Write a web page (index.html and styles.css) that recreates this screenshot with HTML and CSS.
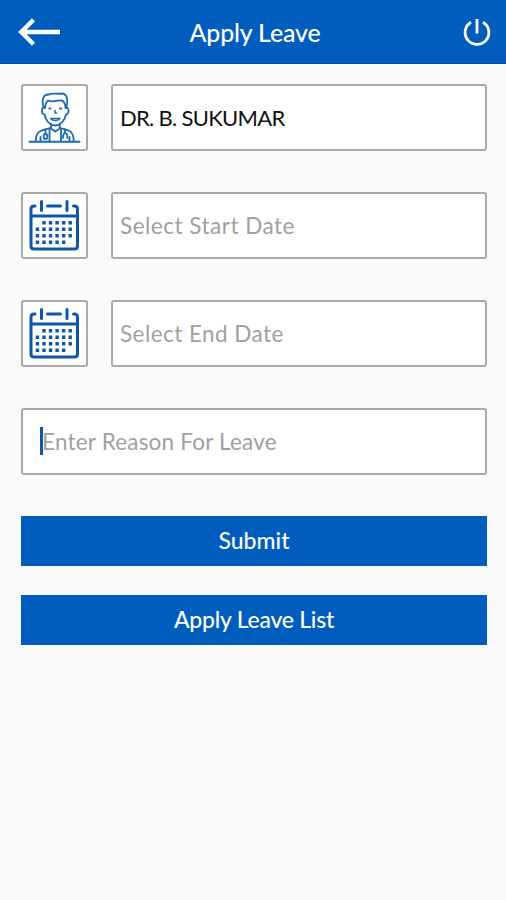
FILE: index.html
```html
<!DOCTYPE html>
<html lang="en">
<head>
    <meta charset="UTF-8">
    <title>Apply Leave</title>
    <link rel="stylesheet" href="styles.css">
</head>

<body>
<div class="header">
    <a href="#" class="back">
        <svg width="44" height="30" viewBox="0 0 44 30">
            <path d="M42 15H3M15.500 2.800L3.300 15L15.500 27.200" fill="none" stroke="#fff" stroke-width="4.4"/>
        </svg>
    </a>
    <h1>Apply Leave</h1>
    <a href="#" class="power">
        <svg width="30" height="30" viewBox="0 0 30 30">
            <path d="M9 5.200A11.900 11.900 0 1 0 21 5.200M15 2V16.500" fill="none" stroke="#fff" stroke-width="2.8"/>
        </svg>
    </a>
</div>

<form action="#" class="leave_form" method="get">
    <div class="row">
        <div class="icon">
            <svg width="67" height="67" viewBox="0 0 67 67">
                <g fill="none" stroke="#1c6ab2" stroke-width="1.8" stroke-linecap="round" stroke-linejoin="round">
                    <path d="M8.500 57.700H58.500" stroke-width="2"/>
                    <path d="M22.800 24C20.500 16 21.500 10.500 28 10.500C31 8.500 37 10.500 41.500 9.500C47 10.500 47 18 45.200 24"/>
                    <path d="M24 24C24.500 20 25 17.500 27 16.500C31 19 36 16 40 16.500C43.500 17 44.500 20 44.500 24"/>
                    <path d="M23.500 23.500C20 23 20 29.500 23.500 30.500C24.500 36.500 29 41.500 34.200 41.500S43.800 36.500 45 30.500C48.500 29.500 48.500 23 45 23.500"/>
                    <path d="M29.500 34.500C32 37.300 36.500 37.300 39 34.500ZM34 26.500V29H35.500" stroke-width="1.500"/>
                    <path d="M28.300 24.500H29.500M39 24.500H40.200" stroke-width="2"/>
                    <path d="M30 40V44.500L34.300 47.500L38.700 44.500V40"/>
                    <path d="M30 44C21 46 15 46 14.700 57M38.700 44C47 46 52.500 46 52.700 57"/>
                    <path d="M28.500 45V57.500M40 45V57.500M19.500 53V57M48.500 53V57"/>
                    <path d="M24.500 45.500V50M24.500 50C22 50 22 55 24.500 55S27 50 24.500 50"/>
                    <path d="M44 45.500V49M42 54C42 47.500 46.500 47.500 46.500 54"/>
                </g>
            </svg>
        </div>
        <input type="text" name="name" id="name" value="DR. B. SUKUMAR">
    </div>
    <div class="row">
        <div class="icon">
            <svg width="67" height="67" viewBox="0 0 67 67">
                <g id="calendar" fill="none" stroke="#0d57ab">
                    <path d="M14 14H13Q10 14 10 17V54Q10 57 13 57H53.500Q56.500 57 56.500 54V17Q56.500 14 53.500 14H52.500M10 24H56.500M26.500 14H39.500M20.500 9.500V18.500M46 9.500V18.500" stroke-width="3" stroke-linecap="round"/>
                    <path d="M21.300 30.700H51.300M14.750 37.300H51.300M14.750 43.800H51.300M14.750 50.300H44.800" stroke-width="3.400" stroke-dasharray="3.400 3.150"/>
                </g>
            </svg>
        </div>
        <input type="text" name="startDate" id="startDate" placeholder="Select Start Date">
    </div>
    <div class="row">
        <div class="icon">
            <svg width="67" height="67" viewBox="0 0 67 67"><use href="#calendar"/></svg>
        </div>
        <input type="text" name="endDate" id="endDate" placeholder="Select End Date">
    </div>
    <div class="row reason_row">
        <input type="text" name="reason" id="reason" placeholder="Enter Reason For Leave">
        <span class="cursor"></span>
    </div>

    <button type="submit" class="btn">Submit</button>
    <button type="button" class="btn btn_list">Apply Leave List</button>
</form>
</body>
</html>
```
FILE: styles.css
```css
*{
    box-sizing: border-box;
}
body{
    margin: 0;
    background: #fafafa;
    font-family: Lato, "Liberation Sans", sans-serif;
}
.header{
    display: flex;
    align-items: center;
    justify-content: space-between;
    height: 64px;
    padding: 0 14px 0 18px;
    background: #005dbd;
    border-bottom: 1px solid #084a9c;
}
.header a{
    display: flex;
    width: 44px;
}
.header .power{
    justify-content: flex-end;
}
.header h1{
    margin: 0;
    color: #fff;
    font-size: 25px;
    font-weight: 500;
    letter-spacing: -0.2px;
}

.leave_form{
    padding: 20px 19px 0 21px;
}
.row{
    display: flex;
    gap: 23px;
    height: 67px;
    margin-bottom: 41px;
}
.icon{
    width: 67px;
    border: 2px solid #a9a9a9;
    border-radius: 3px;
    background: #fff;
}
.icon svg{
    display: block;
    margin: -2px;
}
.row input{
    flex: 1;
    min-width: 0;
    padding: 0 7px;
    border: 2px solid #a9a9a9;
    border-radius: 3px;
    background: #fff;
    color: #111;
    font-family: inherit;
    font-size: 22.5px;
    outline: none;
}
.row input::placeholder{
    color: #a0a0a0;
}
.row #name{
    font-size: 22px;
    letter-spacing: -0.7px;
}
#startDate{
    letter-spacing: 0.5px;
}
#endDate{
    letter-spacing: 0.45px;
}

/*光标压在文字上*/
.reason_row{
    position: relative;
}
.reason_row #reason{
    padding-left: 19px;
    letter-spacing: 0.2px;
}
.cursor{
    position: absolute;
    left: 19px;
    top: 19px;
    width: 3px;
    height: 28px;
    background: #0d57ab;
}

.btn{
    display: block;
    width: 100%;
    height: 50px;
    margin-bottom: 29px;
    padding: 0 0 2px;
    border: none;
    background: #005dbd;
    color: #fff;
    font-family: inherit;
    font-size: 23px;
    font-weight: 500;
}
.btn_list{
    letter-spacing: -0.25px;
}
```
